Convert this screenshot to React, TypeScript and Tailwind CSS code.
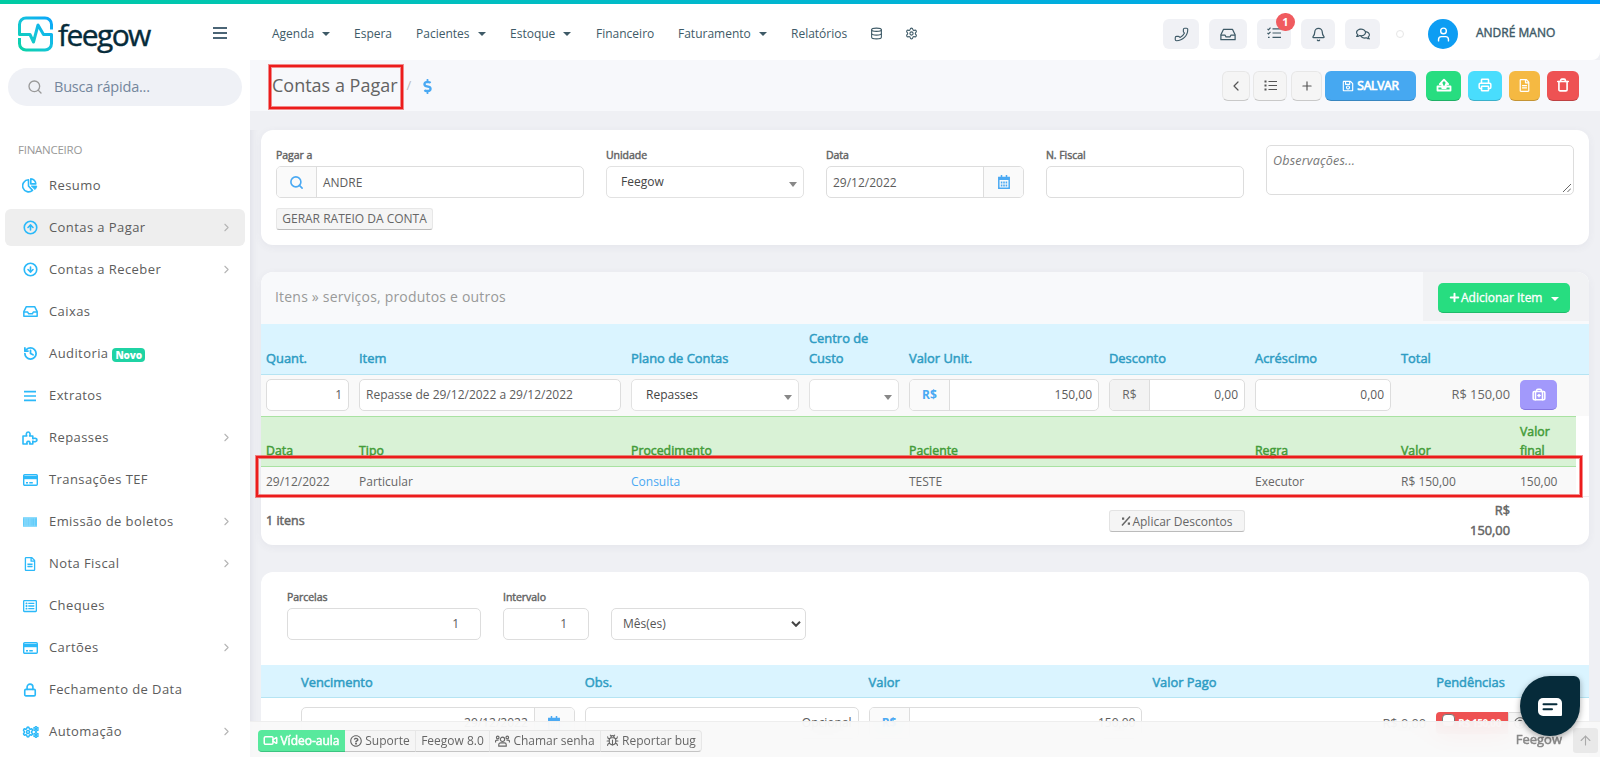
import type { ReactNode } from "react";
import {
    ArrowUp,
    Bell,
    BriefcaseMedical,
    Bug,
    ChevronLeft,
    ChevronRight,
    CircleArrowDown,
    CircleArrowUp,
    Database,
    History,
    Lock,
    Phone,
    Plus,
    Printer,
    Search,
    Settings,
    Trash,
    User,
    Video,
} from "lucide-react";
import {
    FaBarcode,
    FaDollarSign,
    FaRegComments,
    FaRegFileAlt,
    FaRegListAlt,
    FaRegQuestionCircle,
    FaRegSave,
} from "react-icons/fa";

const menu: { label: string; icon: ReactNode; sub?: boolean; active?: boolean; badge?: string }[] = [
    { label: "Resumo", icon: <PieIcon /> },
    { label: "Contas a Pagar", icon: <CircleArrowUp size={15} strokeWidth={2.6} />, sub: true, active: true },
    { label: "Contas a Receber", icon: <CircleArrowDown size={15} strokeWidth={2.6} />, sub: true },
    { label: "Caixas", icon: <InboxIcon /> },
    { label: "Auditoria", icon: <History size={15} strokeWidth={2.8} />, badge: "Novo" },
    { label: "Extratos", icon: <BarsIcon className="h-3 w-3" /> },
    { label: "Repasses", icon: <PuzzleIcon />, sub: true },
    { label: "Transações TEF", icon: <CardIcon /> },
    { label: "Emissão de boletos", icon: <BarcodeIcon />, sub: true },
    { label: "Nota Fiscal", icon: <FaRegFileAlt size={14} />, sub: true },
    { label: "Cheques", icon: <FaRegListAlt size={14} /> },
    { label: "Cartões", icon: <CardIcon />, sub: true },
    { label: "Fechamento de Data", icon: <Lock size={14} strokeWidth={2.8} /> },
    { label: "Automação", icon: <GearsIcon />, sub: true },
];

const nav = [
    { label: "Agenda", caret: true, width: "w-[82px]" },
    { label: "Espera", caret: false, width: "w-[62px]" },
    { label: "Pacientes", caret: true, width: "w-[94px]" },
    { label: "Estoque", caret: true, width: "w-[86px]" },
    { label: "Financeiro", caret: false, width: "w-[82px]" },
    { label: "Faturamento", caret: true, width: "w-[113px]" },
    { label: "Relatórios", caret: false, width: "w-[79px]" },
];

function PieIcon() {
    return (
        <svg viewBox="0 0 16 15" className="h-[15px] w-4" fill="none" stroke="currentColor" strokeWidth="1.6" strokeLinejoin="round">
            <path d="M6.500 1.800a6 6 0 1 0 4 10.600L6.500 8z" />
            <path d="M8.800.9v5h5A5 5 0 0 0 8.800.9z" />
            <path d="M9.200 8h5.600a6 6 0 0 1-1.800 3.600z" fill="currentColor" strokeWidth=".8" />
        </svg>
    );
}

function PuzzleIcon() {
    return (
        <svg viewBox="0 0 16 14" className="h-3.5 w-4" fill="none" stroke="currentColor" strokeWidth="1.600" strokeLinejoin="round">
            <path d="M1 5h3.800c-.9-1.300-.6-4 1.400-4s2.300 2.700 1.400 4h3.200v2.800c1.200-.8 4.200-.7 4.200 1.200s-3 2-4.200 1.200V13H7.600c.8-1.200.5-2.600-1.200-2.600S4.500 11.800 5.200 13H1z" />
        </svg>
    );
}

function CardIcon() {
    return (
        <svg viewBox="0 0 15 12" className="h-3 w-[15px]" fill="none" stroke="currentColor">
            <rect x=".7" y=".7" width="13.600" height="10.600" rx="1" strokeWidth="1.400" />
            <path d="M1 3.600h13" strokeWidth="3.200" />
            <path d="M3 8.700h2M6.300 8.700h3.500" strokeWidth="1.400" />
        </svg>
    );
}

function BarcodeIcon() {
    return (
        <span className="flex bg-[#8fdcfc]">
            <FaBarcode size={14} className="h-2.5 opacity-60" preserveAspectRatio="none" />
        </span>
    );
}

function InboxIcon({ className = "h-[15px] w-[15px]", strokeWidth = 1.8 }: { className?: string; strokeWidth?: number }) {
    return (
        <svg viewBox="0 0 18 14" className={className} fill="none" stroke="currentColor" strokeWidth={strokeWidth} strokeLinejoin="round">
            <path d="M1 7.2 4 1.2h10l3 6v5.6H1z" />
            <path d="M1 7.6h4.6l1.2 2.2h4.4l1.2-2.2H17" />
        </svg>
    );
}

function BarsIcon({ className }: { className: string }) {
    return (
        <svg viewBox="0 0 14 12" className={className} fill="currentColor">
            <path d="M0 0h14v2H0zM0 5h14v2H0zM0 10h14v2H0z" />
        </svg>
    );
}

function GearsIcon() {
    return (
        <span className="flex items-center">
            <Settings size={12} strokeWidth={3} />
            <span className="-ml-px flex flex-col">
                <Settings size={6} strokeWidth={4.5} />
                <Settings size={6} strokeWidth={4.5} />
            </span>
        </span>
    );
}

function Caret({ className = "" }: { className?: string }) {
    return (
        <svg viewBox="0 0 8 4" className={`h-1 w-2 ${className}`} fill="currentColor">
            <path d="M0 0h8L4 4z" />
        </svg>
    );
}

function Logo() {
    return (
        <svg viewBox="0 0 36 36" className="h-9 w-9" fill="none" strokeWidth="3" strokeLinejoin="round">
            <defs>
                <linearGradient id="pulse" x1="0" y1="1" x2="1" y2="0">
                    <stop offset="0" stopColor="#0bd3a4" />
                    <stop offset=".5" stopColor="#14c3dc" />
                    <stop offset="1" stopColor="#0aa5fb" />
                </linearGradient>
            </defs>
            <path
                stroke="url(#pulse)"
                d="M1.500 22v5.500a6.500 6.500 0 0 0 6.500 6.500h19a6.500 6.500 0 0 0 6.500-6.500V18.500h-8L20 9l-4.500 17-3.500-7.500H1.500V8.500A6.500 6.500 0 0 1 8 2H27a6.500 6.500 0 0 1 6.500 6.500V13.500"
            />
        </svg>
    );
}

function Sidebar() {
    return (
        <aside className="flex w-[250px] shrink-0 flex-col bg-white">
            <div className="flex h-14 items-center pl-[18px]">
                <div className="mt-[3px]">
                    <Logo />
                </div>
                <span className="mt-1.5 ml-1 w-[94px] text-[30px] leading-none tracking-[-1.600px] text-[#062b3a] [-webkit-text-stroke:0.4px]">feegow</span>
                <BarsIcon className="mt-0.5 ml-[61px] h-3 w-3.5 text-[#4b6576]" />
            </div>
            <div className="mx-2 mt-2 flex h-[38px] items-center rounded-full bg-[#eff1f6] pl-[19px]">
                <Search size={16} className="text-[#999]" />
                <span className="-mt-px ml-[11px] text-[14.500px] tracking-[-0.2px] text-[#74869c]">Busca rápida...</span>
            </div>
            <div className="mt-[37px] pl-[18px] text-[11.5px] leading-[14px] tracking-[-0.25px] text-[#999]">FINANCEIRO</div>
            <ul className="mt-[10px] px-[5px]">
                {menu.map((item) => (
                    <li
                        key={item.label}
                        className={`mb-[5px] flex h-[37px] items-center rounded-md text-[13px] tracking-[0.42px] text-[#5c5c5c] ${item.active ? "bg-[#eee]" : ""}`}
                    >
                        <span className="ml-[15px] flex w-5 justify-center text-[#2bb9f9]">{item.icon}</span>
                        <span className="ml-[9px]">{item.label}</span>
                        {item.badge && (
                            <span className="mt-[3px] ml-1 rounded bg-[#1fd3a4] px-[3px] text-[10px] leading-[14px] font-extrabold tracking-[-0.2px] text-white">
                                {item.badge}
                            </span>
                        )}
                        {item.sub && <ChevronRight size={13} className="mr-3 ml-auto text-[#b5b5b5]" />}
                    </li>
                ))}
            </ul>
        </aside>
    );
}

function HeaderButton({ width, children }: { width: string; children: ReactNode }) {
    return <span className={`flex h-[30px] items-center justify-center rounded-md bg-[#f0f1f5] ${width}`}>{children}</span>;
}

function Header() {
    return (
        <header className="flex h-14 items-center rounded-br-lg bg-white pt-1 pl-[22px] text-[12px] text-[#3e5a67]">
            {nav.map((item) => (
                <span key={item.label} className={`flex shrink-0 items-center ${item.width}`}>
                    {item.label}
                    {item.caret && <Caret className="ml-2" />}
                </span>
            ))}
            <Database size={13} strokeWidth={2} className="-mt-px" />
            <Settings size={13} strokeWidth={2} className="-mt-px ml-[22px]" />
            <div className="ml-auto flex items-center pr-11">
                <HeaderButton width="w-9">
                    <Phone size={15} strokeWidth={1.8} className="-scale-x-100" />
                </HeaderButton>
                <HeaderButton width="ml-2.5 w-[38px]">
                    <InboxIcon className="h-[15px] w-4" strokeWidth={1.4} />
                </HeaderButton>
                <div className="relative ml-2.5">
                    <HeaderButton width="w-[34px]">
                        <TasksIcon />
                    </HeaderButton>
                    <span className="absolute -top-1.5 left-[19px] flex h-[18px] w-[19px] items-center justify-center rounded-full bg-[#f05b5f] text-[11px] font-bold text-white">
                        1
                    </span>
                </div>
                <HeaderButton width="ml-2.5 w-[34px]">
                    <Bell size={15} strokeWidth={2} />
                </HeaderButton>
                <HeaderButton width="ml-2.5 w-[35px]">
                    <FaRegComments size={14} />
                </HeaderButton>
                <span className="ml-4 h-2 w-2 rounded-full border border-[#e6e6e6]" />
                <span className="ml-6 flex h-[30px] w-[30px] items-center justify-center rounded-full bg-[#0d9df3] text-white">
                    <User size={17} strokeWidth={2} />
                </span>
                <span className="-mt-0.5 ml-[18px] w-20 text-[12px] whitespace-nowrap [-webkit-text-stroke:0.4px]">ANDRÉ MANO</span>
            </div>
        </header>
    );
}

function TasksIcon() {
    return (
        <svg viewBox="0 0 14 12" className="-mt-0.5 h-3 w-3.5" fill="none" stroke="currentColor" strokeWidth="1.2">
            <path d="M5.500 1.800H14M5.500 6H14M5.500 10.300H14M.5 1.800l1 1L3.500.6M.5 6l1 1 2-2.200M1 10.300h1.600" />
        </svg>
    );
}

function ListIcon() {
    return (
        <svg viewBox="0 0 13 11" className="h-[11px] w-[13px]" fill="none" stroke="currentColor" strokeWidth="1.200">
            <path d="M4.500 1.500H13M4.500 5.500H13M4.500 9.500H13" />
            <path d="M.5 1.500h2M.5 5.500h2M.5 9.500h2" strokeWidth="2" />
        </svg>
    );
}

function UploadIcon() {
    return (
        <svg viewBox="0 0 16 14" className="h-3.5 w-4" fill="none" stroke="currentColor" strokeWidth="1.8" strokeLinejoin="round">
            <path d="M5.500 8.500H1.500v4h13v-4h-4M8 11V7.500M6.200 10V6.200H3.800L8 1.600l4.200 4.600H9.800V10z" />
        </svg>
    );
}

function UsersIcon() {
    return (
        <svg viewBox="0 0 16 12" className="h-3 w-[15px]" fill="none" stroke="currentColor" strokeWidth="1.200">
            <circle cx="8" cy="4.200" r="2.300" />
            <path d="M4 11.400V10a2 2 0 0 1 2-2h4a2 2 0 0 1 2 2v1.400z" />
            <circle cx="2.900" cy="2.200" r="1.400" />
            <circle cx="13.100" cy="2.200" r="1.400" />
            <path d="M.6 7.500V6.300a1.200 1.200 0 0 1 1.200-1.200h2M15.400 7.500V6.300a1.200 1.200 0 0 0-1.200-1.200h-2" />
        </svg>
    );
}

function Toolbar() {
    const ghost = "flex h-[30px] items-center justify-center rounded-md border border-[#e7e7e7] border-b-[#c9c9c9] bg-[#f5f5f5] text-[#555]";
    const solid = "flex h-[30px] items-center justify-center rounded-md border-b border-black/20 text-white";
    return (
        <div className="flex h-[51px] items-center bg-[#f7f8fb] pr-[21px] pl-[22px]">
            <h1 className="-mt-0.5 text-[18px] leading-6 text-[#636363]">Contas a Pagar</h1>
            <span className="ml-[9px] text-[13px] text-[#bbb]">/</span>
            <FaDollarSign size={15} className="mt-0.5 ml-[9px] text-[#4aa9f3]" />
            <div className="ml-auto flex items-center">
                <span className={`w-7 ${ghost}`}>
                    <ChevronLeft size={16} strokeWidth={1.8} />
                </span>
                <span className={`ml-[3px] w-[34px] ${ghost}`}>
                    <ListIcon />
                </span>
                <span className={`ml-1 w-[31px] ${ghost}`}>
                    <Plus size={14} strokeWidth={2} />
                </span>
                <span className={`ml-[3px] w-[91px] gap-[3px] bg-[#46a8f1] pt-px text-[12px] tracking-[-0.2px] [-webkit-text-stroke:0.7px] ${solid}`}>
                    <FaRegSave size={12} />
                    SALVAR
                </span>
                <span className={`ml-2.5 w-[35px] bg-[#27dd80] ${solid}`}>
                    <UploadIcon />
                </span>
                <span className={`ml-[7px] w-[34px] bg-[#49ddfd] ${solid}`}>
                    <Printer size={14} strokeWidth={2.6} />
                </span>
                <span className={`ml-[7px] w-[31px] bg-[#f5b942] ${solid}`}>
                    <FaRegFileAlt size={13} />
                </span>
                <span className={`ml-[7px] w-8 bg-[#ee5253] ${solid}`}>
                    <Trash size={14} strokeWidth={2.8} />
                </span>
            </div>
        </div>
    );
}

function Label({ children }: { children: ReactNode }) {
    return <div className="h-[17px] text-[10.500px] leading-[13px] tracking-[-0.05px] text-[#666] [-webkit-text-stroke:0.45px]">{children}</div>;
}

// Text box with optional addons on either side
function Field({ value = "", before, after, right, className = "", pad = "px-1.5" }: { value?: string; before?: ReactNode; after?: ReactNode; right?: boolean; className?: string; pad?: string }) {
    return (
        <div className={`flex h-8 overflow-hidden rounded-[5px] border border-[#ddd] bg-white text-[12px] text-[#5c5c5c] ${className}`}>
            {before && <span className="flex w-10 shrink-0 items-center justify-center border-r border-[#ddd] bg-[#fafafa] text-[#4aa9f3]">{before}</span>}
            <span className={`flex flex-1 items-center ${pad} ${right ? "justify-end" : ""}`}>{value}</span>
            {after && <span className="flex w-10 shrink-0 items-center justify-center border-l border-[#ddd] bg-[#fafafa] text-[#4aa9f3]">{after}</span>}
        </div>
    );
}

function SelectBox({ value = "" }: { value?: string }) {
    return (
        <div className="flex h-8 items-center justify-between rounded-[5px] border border-[#e2e2e2] bg-white pr-1.5 pl-3.5 text-[12px] text-[#444]">
            <span className="-mt-px">{value}</span>
            <svg viewBox="0 0 8 5" className="mt-1 h-[5px] w-2" fill="#888">
                <path d="M0 0h8L4 5z" />
            </svg>
        </div>
    );
}

function CalendarIcon() {
    return (
        <svg viewBox="0 0 12 14" className="h-3.5 w-3" fill="none" stroke="currentColor" strokeWidth="1.500">
            <path d="M.8 2.500h10.400v10.700H.8zM3.500 0v3M8.500 0v3" />
            <path d="M.8 3.800h10.400" strokeWidth="2.500" />
            <path d="M2.800 7.500h6.400M2.800 10.500h6.400" strokeDasharray="1.600 .8" strokeWidth="1.800" />
        </svg>
    );
}

function AccountPanel() {
    return (
        <section className="mt-[19px] h-[115px] rounded-xl bg-white px-[15px] pt-[15px] shadow-[0_2px_8px_rgba(60,60,100,0.06)]">
            <div className="grid grid-cols-12 gap-x-[22px]">
                <div className="col-span-3 pt-1">
                    <Label>Pagar a</Label>
                    <Field value="ANDRE" before={<Search size={15} strokeWidth={2.6} />} pad="px-1.5 pt-px" />
                </div>
                <div className="col-span-2 pt-1">
                    <Label>Unidade</Label>
                    <SelectBox value="Feegow" />
                </div>
                <div className="col-span-2 pt-1">
                    <Label>Data</Label>
                    <Field value="29/12/2022" after={<CalendarIcon />} pad="px-1.5 pt-px" />
                </div>
                <div className="col-span-2 pt-1">
                    <Label>N. Fiscal</Label>
                    <Field />
                </div>
                <div className="relative col-span-3 h-[50px] rounded-[5px] border border-[#ddd] px-1.5 pt-1.5 text-[12.500px] leading-[18px] tracking-[0.2px] text-[#777] italic">
                    Observações...
                    <svg viewBox="0 0 9 9" className="absolute right-0.5 bottom-0.5 h-2 w-2" stroke="#555" fill="none">
                        <path d="M0 9 9 0M5 9l4-4" />
                    </svg>
                </div>
            </div>
            <button className="mt-[10px] h-[22px] w-[157px] rounded-[3px] border border-[#e7e7e7] border-b-[#bbb] bg-[#f5f5f5] text-[12px] leading-5 whitespace-nowrap text-[#666]">
                GERAR RATEIO DA CONTA
            </button>
        </section>
    );
}

function ItemsPanel() {
    const blue = "px-[5px] pb-1.5 align-bottom text-left font-normal leading-5 [-webkit-text-stroke:0.5px]";
    return (
        <section className="mt-[27px] h-[273px] overflow-hidden rounded-xl bg-white shadow-[0_2px_8px_rgba(60,60,100,0.06)]">
            <div className="flex h-[52px] justify-between bg-[#f8f9fb]">
                <h2 className="pt-[14px] pl-3.5 text-[14px] leading-[22px] tracking-[0.2px] text-[#999]">Itens » serviços, produtos e outros</h2>
                <div className="h-[49px] w-[166px] bg-[#f1f2f4] pt-[11px] pl-[15px]">
                    <button className="flex h-[30px] w-[132px] items-center rounded-[5px] border-b border-[#1ebb69] bg-[#27dd80] pl-[10px] text-[12px] whitespace-nowrap text-white [-webkit-text-stroke:0.3px]">
                        <Plus size={13} strokeWidth={3.6} />
                        Adicionar Item
                        <Caret className="mt-0.5 ml-[9px]" />
                    </button>
                </div>
            </div>
            <table className="w-full table-fixed border-collapse text-[12px] leading-[19.500px] text-[#666]">
                <colgroup>
                    <col className="w-[93px]" />
                    <col className="w-[272px]" />
                    <col className="w-[178px]" />
                    <col className="w-[100px]" />
                    <col className="w-[200px]" />
                    <col className="w-[146px]" />
                    <col className="w-[146px]" />
                    <col className="w-[119px]" />
                    <col className="w-[61px]" />
                    <col className="w-[13px]" />
                </colgroup>
                <tbody>
                    <tr className="h-[50px] border-b border-[#b5e4f3] bg-[#daf4ff] text-[12.900px] text-[#2e9cc3]">
                        <th className={blue}>Quant.</th>
                        <th className={blue}>Item</th>
                        <th className={blue}>Plano de Contas</th>
                        <th className={blue}>Centro de Custo</th>
                        <th className={blue}>Valor Unit.</th>
                        <th className={blue}>Desconto</th>
                        <th className={blue}>Acréscimo</th>
                        <th className={blue}>Total</th>
                        <th />
                        <th />
                    </tr>
                    <tr className="h-[42px] bg-[#f9f9f9]">
                        <td className="px-[5px]"><Field value="1" right /></td>
                        <td className="px-[5px]"><Field value="Repasse de 29/12/2022 a 29/12/2022" /></td>
                        <td className="px-[5px]"><SelectBox value="Repasses" /></td>
                        <td className="px-[5px]"><SelectBox /></td>
                        <td className="px-[5px]"><Field value="150,00" before={<b>R$</b>} right /></td>
                        <td className="px-[5px]">
                            <Field value="0,00" before={<span className="flex h-full w-full items-center justify-center bg-[#f3f3f3] text-[#666]">R$</span>} right />
                        </td>
                        <td className="px-[5px]"><Field value="0,00" right /></td>
                        <td className="px-[5px] text-right text-[12.800px]">R$ 150,00</td>
                        <td className="px-[5px]">
                            <span className="flex h-[30px] w-[37px] items-center justify-center rounded-[5px] border-b border-[#8577e0] bg-[#a299fb] text-white">
                                <BriefcaseMedical size={14} strokeWidth={2.6} />
                            </span>
                        </td>
                        <td />
                    </tr>
                    <tr className="h-[50px] text-[12.300px] text-[#449c39]">
                        {["Data", "Tipo", "Procedimento", "", "Paciente", "", "Regra", "Valor", "Valor final"].map((title, i) => (
                            <th key={i} className="border-y border-[#a9e2a2] bg-[#d9f2d6] px-[5px] pb-[5px] text-left align-bottom font-normal [-webkit-text-stroke:0.5px]">
                                {title}
                            </th>
                        ))}
                        <td />
                    </tr>
                    <tr className="h-[30px]">
                        {["29/12/2022", "Particular", "Consulta", "", "TESTE", "", "Executor", "R$ 150,00", "150,00"].map((text, i) => (
                            <td key={i} className={`border-b border-[#eee] bg-[#f9f9f9] px-[5px] pt-0.5 ${text === "Consulta" ? "text-[#4aa9f3]" : ""}`}>
                                {text}
                            </td>
                        ))}
                        <td className="border-b border-[#eee]" />
                    </tr>
                    <tr className="h-12">
                        <td className="px-[5px] text-[12.500px] [-webkit-text-stroke:0.5px]">1 itens</td>
                        <td colSpan={4} />
                        <td className="px-[5px] pt-0.5">
                            <button className="flex h-[22px] w-full items-center justify-center gap-px rounded-[3px] border border-[#e3e3e3] border-b-[#bbb] bg-[#f5f5f5] text-[12px] whitespace-nowrap">
                                <svg viewBox="0 0 10 10" className="h-2.5 w-2.5" fill="currentColor">
                                    <path d="M1 9.500 9 .5" stroke="currentColor" strokeWidth="1.500" />
                                    <path d="M1 1.500h2.200v2.200H1zM6.800 6.500H9v2.200H6.800z" />
                                </svg>
                                Aplicar Descontos
                            </button>
                        </td>
                        <td />
                        <td className="pt-px pr-[5px] pl-16 text-right text-[12.800px] [-webkit-text-stroke:0.5px]">R$ 150,00</td>
                        <td />
                        <td />
                    </tr>
                </tbody>
            </table>
        </section>
    );
}

function InstallmentsPanel() {
    return (
        <section className="mt-[27px] h-[220px] rounded-t-xl bg-white">
            <div className="flex h-[93px] gap-[22px] pt-[19px] pl-[26px]">
                <div className="w-[194px]">
                    <Label>Parcelas</Label>
                    <Field value="1" right pad="pr-[21px]" />
                </div>
                <div className="w-[86px]">
                    <Label>Intervalo</Label>
                    <Field value="1" right pad="pr-[21px]" />
                </div>
                <div className="mt-[17px] flex h-8 w-[195px] items-center justify-between rounded-[5px] border border-[#ddd] pr-1 pl-[11px] text-[12px] text-[#555]">
                    Mês(es)
                    <svg viewBox="0 0 10 6" className="h-1.5 w-2.5" fill="none" stroke="#444" strokeWidth="2">
                        <path d="m1 .8 4 4 4-4" />
                    </svg>
                </div>
            </div>
            <div className="grid h-[33px] grid-cols-[283.800px_283.800px_283.800px_283.800px_1fr] border-b border-[#b5e4f3] bg-[#daf4ff] pl-10 text-[12.900px] leading-[34px] text-[#2e9cc3] [-webkit-text-stroke:0.5px]">
                <span>Vencimento</span>
                <span>Obs.</span>
                <span>Valor</span>
                <span>Valor Pago</span>
                <span>Pendências</span>
            </div>
            <div className="grid grid-cols-[283.800px_283.800px_283.800px_273.800px_1fr] pt-[9px] pl-10">
                <Field value="29/12/2022" after={<CalendarIcon />} right className="mr-2.5" />
                <Field value="Opcional" right className="mr-2.5" />
                <Field value="150,00" before={<b>R$</b>} right className="mr-2.5" />
                <span className="text-right text-[12.800px] leading-8 text-[#666]">R$ 0,00</span>
                <span className="mt-[5px] ml-2.5 flex h-[22px]">
                    <span className="flex w-[72px] items-start rounded-l bg-[#ee5253] pt-0.5 pl-1.5 text-[10px] leading-[18px] font-bold tracking-[-0.4px] whitespace-nowrap text-white">
                        <i className="mr-[3px] h-[13px] w-[13px] rounded-sm border border-[#777] bg-white" />
                        R$ 150,00
                    </span>
                    <span className="flex w-6 items-center justify-center rounded-r border border-[#ddd] bg-[#f5f5f5] text-[#666]">
                        <FaRegQuestionCircle size={12} />
                    </span>
                </span>
            </div>
        </section>
    );
}

function FooterBar() {
    const item = "flex h-[22px] items-center justify-center gap-[3px] border border-l-0 border-[#e7e7e7] border-b-[#c4c4c4] bg-[#f5f5f5]";
    return (
        <footer className="absolute bottom-0 left-[250px] flex h-9 w-[1350px] items-center border-t border-[#eee] bg-[#f8f8f8]/90 pt-0.5 pr-0.5 pl-2 text-[12px] whitespace-nowrap text-[#666] backdrop-blur-md">
            <span className="flex h-[22px] w-[87px] items-center justify-center gap-0.5 rounded-l border-b border-[#3cc481] bg-[#58e99d] pt-px text-[12px] text-white [-webkit-text-stroke:0.5px]">
                <Video size={15} strokeWidth={2.4} />
                Vídeo-aula
            </span>
            <span className={`w-[71px] ${item}`}>
                <FaRegQuestionCircle size={12} />
                Suporte
            </span>
            <span className={`w-[74px] ${item}`}>Feegow 8.0</span>
            <span className={`w-[111px] ${item}`}>
                <UsersIcon />
                Chamar senha
            </span>
            <span className={`w-[101px] rounded-r ${item}`}>
                <Bug size={13} strokeWidth={2} />
                Reportar bug
            </span>
            <span className="-mt-0.5 ml-auto text-[13px] text-[#888] [-webkit-text-stroke:0.5px]">Feegow</span>
            <span className="ml-[11px] flex h-[25px] w-[25px] items-center justify-center rounded-[3px] bg-[#e9e9e9] text-[#aaa]">
                <ArrowUp size={15} strokeWidth={1.8} />
            </span>
        </footer>
    );
}

function Highlight({ className }: { className: string }) {
    return <div className={`absolute border-2 border-[#ec1c1c] shadow-[0_0_0_1px_rgba(236,28,28,0.5),inset_0_0_0_1px_rgba(236,28,28,0.5)] ${className}`} />;
}

export default function App() {
    return (
        <div className="relative h-[757px] w-[1600px] overflow-hidden bg-[#eff0f4] font-['Open_Sans',sans-serif]">
            <div className="h-1 bg-linear-to-r from-[#00cba3] to-[#009bf8]" />
            <div className="flex h-[753px]">
                <Sidebar />
                <main className="w-[1350px] shrink-0">
                    <Header />
                    <Toolbar />
                    <div className="px-[11px] shadow-[inset_8px_0_8px_-8px_rgba(60,60,100,0.12)]">
                        <AccountPanel />
                        <ItemsPanel />
                        <InstallmentsPanel />
                    </div>
                </main>
            </div>
            <FooterBar />
            <Highlight className="top-[65px] left-[269px] h-11 w-[134px]" />
            <Highlight className="top-[456px] left-[256px] h-[41px] w-[1326px]" />
            <div className="absolute top-[676px] left-[1520px] flex h-[60px] w-[60px] items-center justify-center rounded-[30px_6px_30px_30px] bg-[#062b3a] pt-0.5 shadow-[0_2px_6px_rgba(0,0,0,0.35)]">
                <svg viewBox="0 0 24 18" className="h-[18px] w-6">
                    <path d="M5 0h14a5 5 0 0 1 5 5v12a1 1 0 0 1-1 1H5a5 5 0 0 1-5-5V5a5 5 0 0 1 5-5z" fill="#fff" />
                    <path d="M5.500 6.200h13M5.500 11.200h8.500" stroke="#062b3a" strokeWidth="2" strokeLinecap="round" />
                </svg>
            </div>
        </div>
    );
}
